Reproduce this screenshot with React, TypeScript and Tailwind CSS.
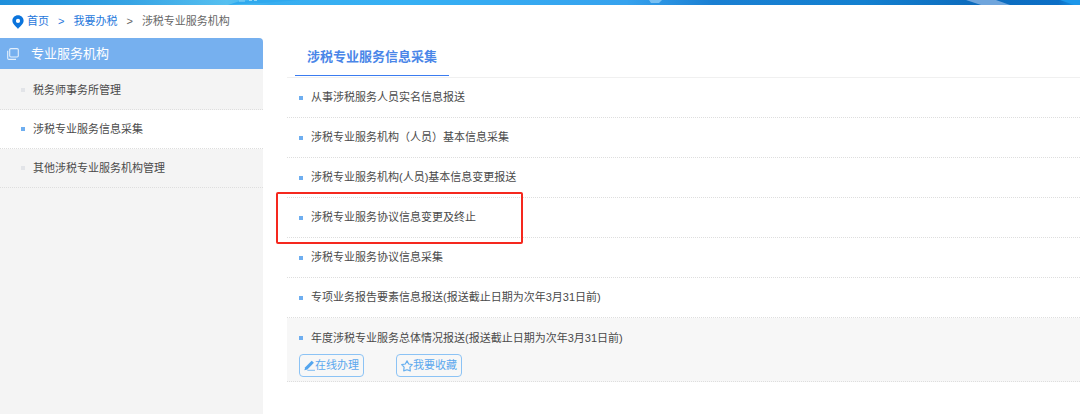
import { useState } from "react";

const menuItems = [
  "税务师事务所管理",
  "涉税专业服务信息采集",
  "其他涉税专业服务机构管理",
];

const services = [
  "从事涉税服务人员实名信息报送",
  "涉税专业服务机构（人员）基本信息采集",
  "涉税专业服务机构(人员)基本信息变更报送",
  "涉税专业服务协议信息变更及终止",
  "涉税专业服务协议信息采集",
  "专项业务报告要素信息报送(报送截止日期为次年3月31日前)",
  "年度涉税专业服务总体情况报送(报送截止日期为次年3月31日前)",
];

const HIGHLIGHTED = 3;
const EXPANDED = 6;

const Banner = () => (
  <svg
    className="block h-[5px] w-full"
    viewBox="0 0 1080 5"
    preserveAspectRatio="none"
    aria-hidden="true"
  >
    <defs>
      <linearGradient id="sky" x1="0" x2="1" y1="0" y2="0">
        <stop offset="0" stopColor="#1f8fdb" />
        <stop offset="0.12" stopColor="#37a4e4" />
        <stop offset="0.21" stopColor="#56c0f0" />
        <stop offset="0.25" stopColor="#38aef0" />
        <stop offset="0.38" stopColor="#36b0f4" />
        <stop offset="0.58" stopColor="#36a2ee" />
        <stop offset="0.66" stopColor="#1a7fd2" />
        <stop offset="0.8" stopColor="#1380d0" />
        <stop offset="0.9" stopColor="#0d6cbd" />
        <stop offset="0.98" stopColor="#0c6fc6" />
        <stop offset="1" stopColor="#1c9aec" />
      </linearGradient>
    </defs>
    <rect width="1080" height="5" fill="url(#sky)" />
    <path d="M228 5L240 1L258 0H300L262 3Z" fill="#2fa9ee" />
    <path d="M239 1h6M249 0.5h3M254 0.5h3" stroke="#8fd6f6" />
    <path d="M649 0h13l-3 3h-8z" fill="#79c0f2" />
    <path d="M966 0h30l14 5h-29z" fill="#6fa5dc" />
    <path d="M1060 0h20v5h-6z" fill="#1c97ea" />
  </svg>
);

const PinIcon = () => (
  <svg className="h-[14px] w-3" viewBox="0 0 12 14" aria-hidden="true">
    <path
      fillRule="evenodd"
      fill="#0b74dc"
      d="M6 0.3C2.8 0.3 0.4 2.7 0.4 5.8C0.4 9.2 3.8 11.2 6 13.9C8.2 11.2 11.6 9.2 11.6 5.8C11.6 2.7 9.2 0.3 6 0.3ZM6 3.8A2.1 2.1 0 1 1 6 8A2.1 2.1 0 1 1 6 3.8Z"
    />
  </svg>
);

const CopyIcon = () => (
  <svg
    className="size-3"
    viewBox="0 0 12 12"
    fill="none"
    stroke="#e3effc"
    aria-hidden="true"
  >
    <rect x="2.7" y="0.6" width="8.6" height="8.4" rx="1.2" strokeWidth="1.1" />
    <path d="M0.7 2.8V10.2Q0.7 11.4 1.9 11.4H9" strokeWidth="1.1" />
  </svg>
);

const PencilIcon = () => (
  <svg className="size-[11px]" viewBox="0 0 11 11" aria-hidden="true">
    <path d="M0.4 10.3L1.2 7.2L7.7 0.8L9.9 2.8L3.4 9.4Z" fill="#54a5ee" />
    <path d="M3.4 10.3H11" stroke="#7dbbf2" />
  </svg>
);

const StarIcon = () => (
  <svg className="size-3" viewBox="0 0 12 12" aria-hidden="true">
    <path
      d="M6 0.9L7.7 4L11.3 4.7L8.9 7.2L9.3 10.9L6 9.7L2.7 10.9L3.1 7.2L0.7 4.7L4.3 4Z"
      fill="none"
      stroke="#68b0ef"
      strokeWidth="1.2"
      strokeLinejoin="round"
    />
  </svg>
);

const App = () => {
  const [active, setActive] = useState(1);

  return (
    <div className="flex min-h-screen flex-col bg-white font-['Liberation_Sans','Noto_Sans_CJK_SC',sans-serif] text-[11px] text-[#4a4a4a]">
      <Banner />

      <nav className="flex h-[33px] items-center pl-3" aria-label="breadcrumb">
        <PinIcon />
        <a href="#home" className="ml-[3px] text-[#1f78dc]">
          首页
        </a>
        <span className="mx-[9px] text-[#1f78dc]">&gt;</span>
        <a href="#tax" className="text-[#1f78dc]">
          我要办税
        </a>
        <span className="mx-[9px] text-[#666]">&gt;</span>
        <span className="text-[#666]">涉税专业服务机构</span>
      </nav>

      <div className="flex grow gap-6">
        <aside className="w-[263px] shrink-0 rounded-tr-sm bg-[#f4f4f4]">
          <h2 className="flex h-[31px] items-center gap-3 rounded-tr-sm bg-[#76b0ef] pl-[7px] text-[13px] text-white">
            <CopyIcon />
            专业服务机构
          </h2>
          <ul className="pt-0.5">
            {menuItems.map((item, i) => (
              <li
                key={item}
                className={`border-b border-dotted border-[#dedede] ${
                  i === active ? "bg-white" : ""
                }`}
              >
                <button
                  type="button"
                  onClick={() => setActive(i)}
                  className="flex h-[38px] w-full items-center gap-2 pl-[21px] text-left"
                >
                  <span
                    className={`size-1 ${
                      i === active ? "bg-[#6eaef0]" : "bg-[#e2e4e8]"
                    }`}
                  />
                  {item}
                </button>
              </li>
            ))}
          </ul>
        </aside>

        <main className="min-w-0 grow">
          <div className="flex h-10 border-b border-[#f0f0f0] pl-2">
            <h1 className="flex h-[38px] items-center border-b border-[#3b7cf0] px-3 text-[13px] font-bold text-[#4a86e8]">
              涉税专业服务信息采集
            </h1>
          </div>
          <ul>
            {services.map((service, i) => (
              <li
                key={service}
                className={`relative border-b border-dotted border-[#dedede] ${
                  i === EXPANDED ? "bg-[#f7f7f7] pb-1" : ""
                }`}
              >
                <a
                  href="#service"
                  className={`flex items-center gap-2 pl-3 ${
                    i === EXPANDED ? "h-9 pt-1" : "h-[39px]"
                  }`}
                >
                  <span className="size-1 bg-[#6eaef0]" />
                  {service}
                </a>
                {i === HIGHLIGHTED && (
                  <span className="pointer-events-none absolute -top-[6px] -left-[11px] z-10 h-[52px] w-[247px] rounded-xs border-2 border-[#f5281e]" />
                )}
                {i === EXPANDED && (
                  <div className="flex gap-8 pl-3 text-[#5ba8ee]">
                    <button
                      type="button"
                      className="flex h-[23px] items-center rounded-sm border border-[#8cc3f5] px-1"
                    >
                      <PencilIcon />
                      在线办理
                    </button>
                    <button
                      type="button"
                      className="flex h-[23px] items-center rounded-sm border border-[#8cc3f5] px-1"
                    >
                      <StarIcon />
                      我要收藏
                    </button>
                  </div>
                )}
              </li>
            ))}
          </ul>
        </main>
      </div>
    </div>
  );
};

export default App;
